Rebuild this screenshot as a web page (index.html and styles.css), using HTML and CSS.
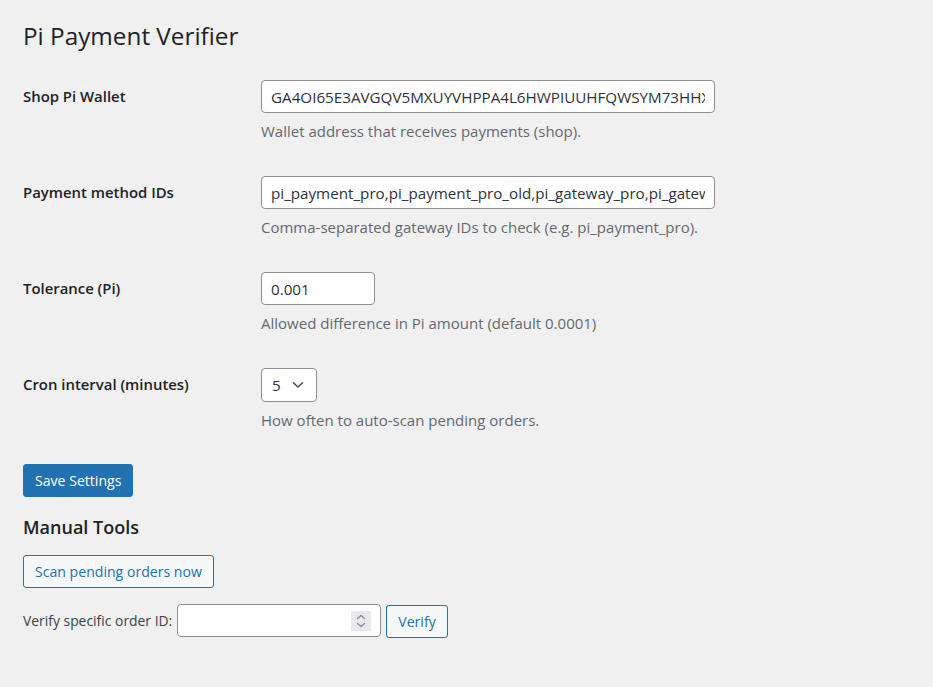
FILE: index.html
```html
<!DOCTYPE html>
<html lang="en">

<head>
    <meta charset="UTF-8">
    <meta name="viewport" content="width=device-width, initial-scale=1.0">
    <title>Pi Payment Verifier</title>
    <link rel="stylesheet" href="styles.css">
</head>

<body>
<div class="wrap">
    <h1>Pi Payment Verifier</h1>

    <form class="settings">
        <div class="field-row">
            <label class="field-label" for="wallet">Shop Pi Wallet</label>
            <div class="field-control">
                <input id="wallet" class="text-input wide" type="text" value="GA4OI65E3AVGQV5MXUYVHPPA4L6HWPIUUHFQWSYM73HHXKQ2ZR7BDE4">
                <p class="description">Wallet address that receives payments (shop).</p>
            </div>
        </div>

        <div class="field-row">
            <label class="field-label" for="methods">Payment method IDs</label>
            <div class="field-control">
                <input id="methods" class="text-input wide" type="text" value="pi_payment_pro,pi_payment_pro_old,pi_gateway_pro,pi_gateway_pro_old">
                <p class="description">Comma-separated gateway IDs to check (e.g. pi_payment_pro).</p>
            </div>
        </div>

        <div class="field-row">
            <label class="field-label" for="tolerance">Tolerance (Pi)</label>
            <div class="field-control">
                <input id="tolerance" class="text-input small" type="text" value="0.001">
                <p class="description">Allowed difference in Pi amount (default 0.0001)</p>
            </div>
        </div>

        <div class="field-row">
            <label class="field-label" for="interval">Cron interval (minutes)</label>
            <div class="field-control">
                <span class="select-wrap">
                    <select id="interval" class="select-input">
                        <option>5</option>
                        <option>10</option>
                        <option>15</option>
                        <option>30</option>
                    </select>
                    <svg class="select-arrow" width="12" height="8" viewBox="0 0 12 8">
                        <path d="M1.5 1.8 L6 6 L10.5 1.8" fill="none" stroke="#50575e" stroke-width="1.6" stroke-linecap="round" stroke-linejoin="round"/>
                    </svg>
                </span>
                <p class="description">How often to auto-scan pending orders.</p>
            </div>
        </div>

        <div class="submit">
            <button type="button" class="button button-primary">Save Settings</button>
        </div>
    </form>

    <h2>Manual Tools</h2>

    <div class="tool-row">
        <button type="button" class="button button-secondary">Scan pending orders now</button>
    </div>

    <div class="verify-row">
        <label for="order-id">Verify specific order ID:</label>
        <span class="number-wrap">
            <input id="order-id" class="text-input order-input" type="text">
            <span class="spin">
                <svg width="20" height="20" viewBox="0 0 20 20">
                    <path d="M6.5 7.5 L10 4.5 L13.5 7.5" fill="none" stroke="#8a8a92" stroke-width="1.3" stroke-linecap="round" stroke-linejoin="round"/>
                    <path d="M6.5 12.5 L10 15.5 L13.5 12.5" fill="none" stroke="#8a8a92" stroke-width="1.3" stroke-linecap="round" stroke-linejoin="round"/>
                </svg>
            </span>
        </span>
        <button type="button" class="button button-secondary">Verify</button>
    </div>
</div>
</body>

</html>
```

FILE: styles.css
```css
html, body {
    margin: 0;
    background: #f0f0f1;
}

body {
    font-family: "Open Sans", "Noto Sans", sans-serif;
    font-size: 14px;
    color: #3c434a;
}

.wrap {
    padding: 19px 20px 40px 23px;
}

h1 {
    margin: 0;
    font-size: 24.3px;
    font-weight: 400;
    line-height: 33px;
    color: #1d2327;
}

.settings {
    margin-top: 12px;
}

.field-row {
    display: grid;
    grid-template-columns: 238px 1fr;
    padding: 16px 0 18px;
}

.field-label {
    font-size: 14.9px;
    font-weight: 600;
    line-height: 33px;
    color: #1d2327;
}

.field-control {
    display: flex;
    flex-direction: column;
    align-items: flex-start;
}

.text-input {
    box-sizing: border-box;
    height: 33px;
    padding: 0 9px;
    border: 1px solid #8c8f94;
    border-radius: 4px;
    background: #fff;
    font-family: inherit;
    font-size: 15.2px;
    color: #2c3338;
    outline: none;
}

.text-input.wide {
    width: 454px;
}

.text-input.small {
    width: 114px;
}

.description {
    margin: 8px 0 0;
    font-size: 15px;
    line-height: 21px;
    color: #646970;
}

/* select with drawn chevron */
.select-wrap {
    position: relative;
    display: inline-block;
}

.select-input {
    box-sizing: border-box;
    width: 56px;
    height: 34px;
    padding: 0 20px 0 10px;
    border: 1px solid #8c8f94;
    border-radius: 4px;
    background: #fff;
    font-family: inherit;
    font-size: 15.2px;
    color: #2c3338;
    -webkit-appearance: none;
    appearance: none;
    outline: none;
}

.select-arrow {
    position: absolute;
    right: 13px;
    top: 13px;
    pointer-events: none;
}

.submit {
    margin-top: 15px;
}

.button {
    box-sizing: border-box;
    height: 33px;
    padding: 0 11px;
    border-radius: 3px;
    font-family: inherit;
    font-size: 14.1px;
    line-height: 31px;
    cursor: pointer;
}

.button-primary {
    background: #2271b1;
    border: 1px solid #2271b1;
    color: #fff;
}

.button-secondary {
    background: #f6f7f7;
    border: 1px solid #2271b1;
    color: #2271b1;
}

h2 {
    margin: 18px 0 16px;
    font-size: 18px;
    font-weight: 600;
    line-height: 24px;
    color: #1d2327;
}

.verify-row {
    display: flex;
    align-items: center;
    gap: 5px;
    margin-top: 15px;
}

.verify-row label {
    font-size: 13.9px;
    color: #3c434a;
}

.number-wrap {
    position: relative;
    display: inline-block;
}

.order-input {
    display: block;
    width: 204px;
}

.spin {
    position: absolute;
    right: 10px;
    top: 7px;
    width: 20px;
    height: 20px;
    background: #e9e9ed;
}

.spin svg {
    display: block;
}

.verify-row .button {
    margin-top: 2px;
}
```
